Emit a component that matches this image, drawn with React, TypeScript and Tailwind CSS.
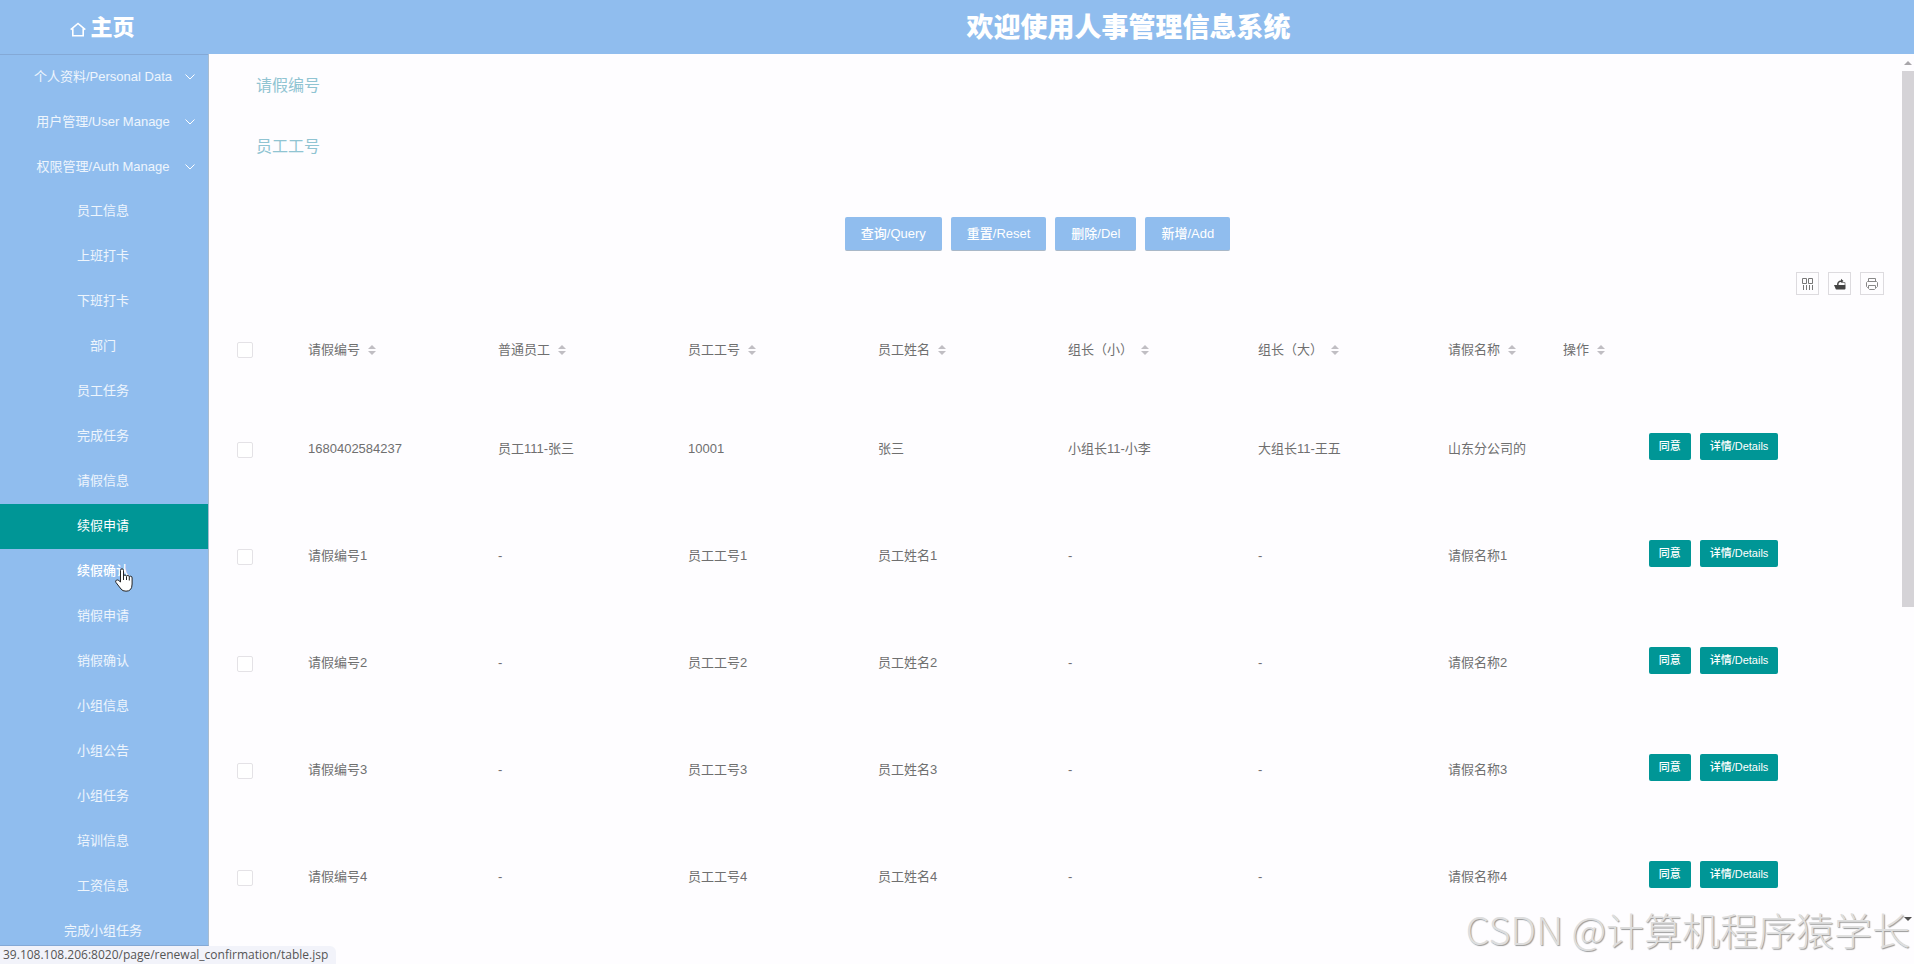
import { useState } from 'react'

const groups = ['个人资料/Personal Data', '用户管理/User Manage', '权限管理/Auth Manage']

const links = [
  '员工信息', '上班打卡', '下班打卡', '部门', '员工任务', '完成任务', '请假信息', '续假申请',
  '续假确认', '销假申请', '销假确认', '小组信息', '小组公告', '小组任务', '培训信息', '工资信息', '完成小组任务',
]

const columns = ['请假编号', '普通员工', '员工工号', '员工姓名', '组长（小）', '组长（大）', '请假名称', '操作']

const rows = [
  ['1680402584237', '员工111-张三', '10001', '张三', '小组长11-小李', '大组长11-王五', '山东分公司的'],
  ['请假编号1', '-', '员工工号1', '员工姓名1', '-', '-', '请假名称1'],
  ['请假编号2', '-', '员工工号2', '员工姓名2', '-', '-', '请假名称2'],
  ['请假编号3', '-', '员工工号3', '员工姓名3', '-', '-', '请假名称3'],
  ['请假编号4', '-', '员工工号4', '员工姓名4', '-', '-', '请假名称4'],
]

const checkboxClass = 'block size-4 appearance-none rounded-xs border border-[#e4e2e6] bg-white checked:bg-[#009696]'

function SortIcon() {
  return (
    <svg viewBox="0 0 8 10" className="h-2.5 w-2 fill-[#c0bec3]">
      <path d="M4 0 8 4H0zM0 6h8L4 10z" />
    </svg>
  )
}

function HomeIcon() {
  return (
    <svg viewBox="0 0 16 15" className="mt-1 h-[15px] w-4 fill-none stroke-white" strokeWidth="1.6">
      <path d="M.7 7.600 8 1.500l7.300 6.100M2.800 6.500v7.300h10.400V6.500" />
    </svg>
  )
}

function ColumnsIcon() {
  return (
    <svg viewBox="0 0 12 12" className="size-3 fill-none stroke-[#777]">
      <path d="M.5.5h4v5h-4zM6.500.5h4v5h-4zM1.500 7v5M4.500 7v5M7.500 7v5M10.500 7v5" />
    </svg>
  )
}

function ExportIcon() {
  return (
    <svg viewBox="0 0 12 12" className="size-3">
      <path d="M0 7h11.500v3.500q0 1-1 1h-8q-1 0-1-1z" fill="#444" />
      <path d="M3 7c0-3 1.500-4.500 4-4.500V.8L9.500 3 7 5v-1C5 4 4.500 5 4.500 7z" fill="#444" />
      <path d="M8 4.500h3V7" fill="none" stroke="#888" />
    </svg>
  )
}

function PrintIcon() {
  return (
    <svg viewBox="0 0 12 12" className="size-3 fill-none stroke-[#888]">
      <path d="M2.500 3.500v-3h7v3M2.500 9.500h-1l-1-1v-4l1-1h9l1 1v4l-1 1h-1M2.500 7.500h7v3l-1 1h-5l-1-1z" />
    </svg>
  )
}

function HandCursor() {
  return (
    <svg viewBox="0 0 18 24" className="pointer-events-none absolute top-[19px] left-[115px] z-10 h-6 w-[18px]">
      <path
        d="M5.500 14V2.500Q5.500.8 7 .8t1.500 1.700V8q.3-1 1.500-1t1.500 1.300q.3-.8 1.400-.8t1.400 1.300q.3-.6 1.300-.6 1.500 0 1.500 1.800v6Q17 20 15.500 21.500 14 23.200 11 23.200q-3.500 0-5-2.200L1 14.500Q0 12.800 1.300 12.200t2.500.3z"
        fill="#fff"
        stroke="#222"
      />
      <path d="M8.500 8v4M11.500 8.500V12M14.300 9v3.500" stroke="#222" />
    </svg>
  )
}

export default function App() {
  const [active, setActive] = useState('续假申请')

  return (
    <div className="relative flex h-screen flex-col overflow-hidden bg-[#fefdff] font-['Liberation_Sans','Noto_Sans_CJK_SC',sans-serif] text-[13px] text-[#6f6f6f]">
      <header className="flex h-[54px] shrink-0 items-center bg-[#90bdee] text-white">
        <a href="#" className="flex w-[209px] items-center justify-center gap-1 pr-1 font-black text-[22px]">
          <HomeIcon />
          主页
        </a>
        <h1 className="flex-1 pt-0.5 pl-[134px] text-center text-[27px] font-black">欢迎使用人事管理信息系统</h1>
      </header>

      <div className="flex min-h-0 flex-1">
        <nav className="mb-[18px] w-[209px] shrink-0 overflow-hidden border-r border-b border-[#84a9d6] border-r-[#a9bccf] bg-[#90bdee] text-white/85 shadow-[inset_0_1px_0_#84a9d6]">
          {groups.map((g) => (
            <button key={g} className="relative flex h-[45px] w-full items-center justify-center pr-0.5">
              {g}
              <svg viewBox="0 0 10 6" className="absolute right-[13px] h-1.5 w-2.5 fill-none stroke-white">
                <path d="M.5.5 5 5 9.500.5" />
              </svg>
            </button>
          ))}
          <ul>
            {links.map((l) => (
              <li key={l} className="relative">
                <a
                  href="#"
                  onClick={() => setActive(l)}
                  className={`flex h-[45px] items-center justify-center pr-0.5 pb-px ${
                    l === active ? 'bg-[#009696] text-white' : l === '续假确认' ? 'font-medium text-white' : ''
                  }`}
                >
                  {l}
                </a>
                {l === '续假确认' && <HandCursor />}
              </li>
            ))}
          </ul>
        </nav>

        <main className="min-w-0 flex-1 overflow-hidden">
          <form className="pt-px text-base text-[#90c4d2]">
            <div className="flex h-[61px] items-center pl-[47px]">
              <label htmlFor="leaveNo" className="w-28">请假编号</label>
              <input id="leaveNo" className="w-48 outline-none" />
            </div>
            <div className="flex h-[61px] items-center pl-[47px]">
              <label htmlFor="staffNo" className="w-28">员工工号</label>
              <input id="staffNo" className="w-48 outline-none" />
            </div>
          </form>

          <div className="mt-10 flex justify-center gap-[9px] pr-9 text-[13px] font-medium text-white">
            {['查询/Query', '重置/Reset', '删除/Del', '新增/Add'].map((b) => (
              <button key={b} className="h-[34px] rounded-xs border-b border-[#a9b8c8] bg-[#90bdee] px-4">
                {b}
              </button>
            ))}
          </div>

          <div className="mt-[21px] flex justify-end gap-[9px] pr-[18px]">
            <button aria-label="筛选列" className="flex size-[23px] items-center justify-center border border-[#dddbdf]">
              <ColumnsIcon />
            </button>
            <button aria-label="导出" className="flex size-[23px] items-center justify-center border border-[#dddbdf]">
              <ExportIcon />
            </button>
            <button aria-label="打印" className="flex h-[23px] w-6 items-center justify-center border border-[#dddbdf]">
              <PrintIcon />
            </button>
          </div>

          <div className="mt-2 pr-[22px]">
            <table className="w-full table-fixed text-left">
              <colgroup>
                <col className="w-[83px]" />
                <col className="w-[190px]" />
                <col className="w-[190px]" />
                <col className="w-[190px]" />
                <col className="w-[190px]" />
                <col className="w-[190px]" />
                <col className="w-[190px]" />
                <col className="w-[115px]" />
                <col />
              </colgroup>
              <thead>
                <tr className="h-[93px]">
                  <th className="pl-7">
                    <input type="checkbox" aria-label="全选" className={checkboxClass} />
                  </th>
                  {columns.map((c) => (
                    <th key={c} className="pl-4 font-normal whitespace-nowrap">
                      <span className="flex items-center gap-2">
                        {c}
                        <SortIcon />
                      </span>
                    </th>
                  ))}
                </tr>
              </thead>
              <tbody>
                {rows.map((r) => (
                  <tr key={r[0]} className="h-[107px]">
                    <td className="pl-7">
                      <input type="checkbox" aria-label={r[0]} className={checkboxClass} />
                    </td>
                    {r.map((cell, i) => (
                      <td key={i} className="pb-px pl-4 whitespace-nowrap">{cell}</td>
                    ))}
                    <td className="pb-[7px]">
                      <div className="flex justify-center gap-[9px] text-[11px] font-medium text-white">
                        <button className="h-[27px] rounded-xs bg-[#009696] px-2.5">同意</button>
                        <button className="h-[27px] rounded-xs bg-[#009696] px-2.5">详情/Details</button>
                      </div>
                    </td>
                  </tr>
                ))}
              </tbody>
            </table>
          </div>
        </main>

        <div className="mb-[43px] flex w-3 shrink-0 flex-col items-center pt-[7px]">
          <svg viewBox="0 0 8 4" className="h-1 w-2 shrink-0 fill-[#a8a6aa]">
            <path d="M4 0 8 4H0z" />
          </svg>
          <div className="mt-1.5 h-[536px] w-full bg-[#d5d3d7]" />
          <svg viewBox="0 0 8 4" className="mt-auto h-1 w-2 shrink-0 fill-[#505050]">
            <path d="M0 0h8L4 4z" />
          </svg>
        </div>
      </div>

      <div className="absolute bottom-0 left-0 rounded-tr-md bg-[#f2f3fa] pr-2 pl-[3px] font-['Open_Sans',sans-serif] text-xs leading-[18px] text-[#555]">
        39.108.108.206:8020/page/renewal_confirmation/table.jsp
      </div>
      <div className="pointer-events-none absolute right-1 bottom-1 pb-[3px] font-['Noto_Sans_CJK_SC',sans-serif] text-[38px] font-light text-[#dedede] [text-shadow:1px_1px_1px_#999]">
        CSDN @计算机程序猿学长
      </div>
    </div>
  )
}
